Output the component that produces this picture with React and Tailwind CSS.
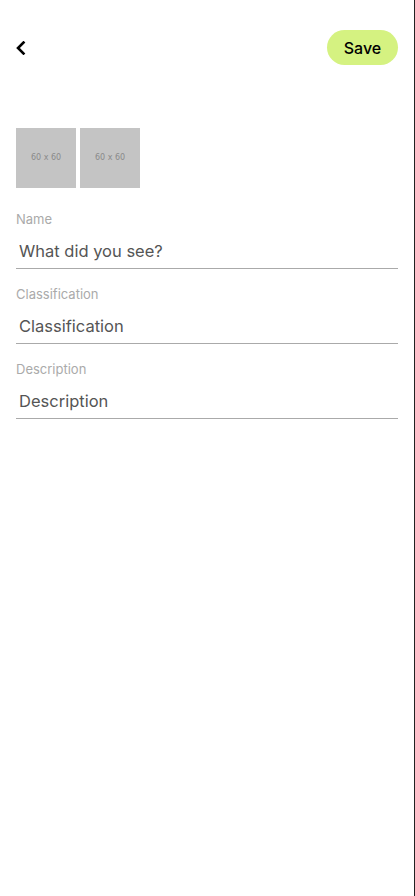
export default function App() {
  const fields = [
    { label: "Name", placeholder: "What did you see?" },
    { label: "Classification", placeholder: "Classification" },
    { label: "Description", placeholder: "Description" },
  ];

  return (
    <div
      className="min-h-[896px] w-[415px] border-r border-[#222] bg-white"
      style={{ fontFamily: "Inter, 'Noto Sans', sans-serif" }}
    >
      <header className="flex items-center justify-between pl-[15px] pr-[16px] pt-[30px]">
        <button className="flex h-[35px] w-[12px] items-center text-black">
          <svg width="11" height="14" viewBox="0 0 11 14" fill="none">
            <path
              d="M8.5 1.5 L3 7 L8.5 12.5"
              stroke="currentColor"
              strokeWidth="2.6"
              strokeLinecap="square"
            />
          </svg>
        </button>
        <button className="h-[35px] w-[71px] rounded-full bg-[#d5f281] text-[16px] font-medium text-black">
          Save
        </button>
      </header>

      <div className="mt-[63px] flex gap-[4px] px-[16px]">
        {[0, 1].map((i) => (
          <div
            key={i}
            className="flex h-[60px] w-[60px] items-center justify-center bg-[#c4c4c4] text-[8px] text-[#8a8a8a]"
            style={{ fontFamily: "'DejaVu Sans', sans-serif" }}
          >
            60 x 60
          </div>
        ))}
      </div>

      <form className="mt-[22px] flex flex-col gap-[16px] px-[16px]">
        {fields.map((f) => (
          <label key={f.label} className="block">
            <span className="block text-[13px] leading-[18px] text-[#aaaaaa]">
              {f.label}
            </span>
            <input
              placeholder={f.placeholder}
              className="mt-[6px] block h-[35px] w-full border-b border-[#aaaaaa] px-[3px] text-[16.5px] text-[#555] placeholder:text-[#555] focus:outline-none"
            />
          </label>
        ))}
      </form>
    </div>
  );
}
